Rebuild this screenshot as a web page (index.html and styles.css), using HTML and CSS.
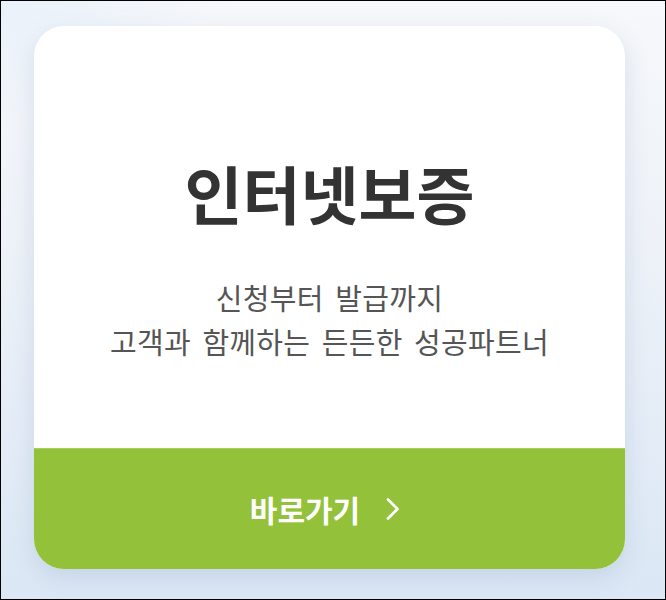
FILE: index.html
```html
<!DOCTYPE html>
<html lang="ko">
<head>
    <meta charset="UTF-8">
    <meta name="viewport" content="width=device-width, initial-scale=1.0">
    <title>인터넷보증</title>
    <link rel="stylesheet" href="styles.css">
</head>
<body>

<div class="frame">
    <div class="guarantee-card">
        <div class="card-body">
            <h2>인터넷보증</h2>
            <p>신청부터 발급까지<br>고객과 함께하는 든든한 성공파트너</p>
        </div>
        <a class="card-link" href="#">
            <span>바로가기</span>
            <svg width="16" height="24" viewBox="0 0 16 24">
                <path d="M3 2.5 L12.5 12 L3 21.5" fill="none" stroke="#fff" stroke-width="2.6" stroke-linecap="round" stroke-linejoin="round"/>
            </svg>
        </a>
    </div>
</div>

</body>
</html>
```

FILE: styles.css
```css
body {
    margin: 0;
    font-family: "Noto Sans CJK KR", "Noto Sans", sans-serif;
}

.frame {
    box-sizing: border-box;
    width: 666px;
    height: 600px;
    border: 1px solid #000;
    padding: 25px 40px 30px 33px;
    background:
        linear-gradient(150deg, rgba(232, 240, 250, 0.9) 0, rgba(232, 240, 250, 0) 14%),
        linear-gradient(180deg, #f6f8fb 0%, #eef2f8 40%, #dbe7f5 100%);
}

.guarantee-card {
    height: 543px;
    background-color: #fff;
    border-radius: 30px;
    overflow: hidden;
    display: flex;
    flex-direction: column;
    box-shadow: 0 8px 24px rgba(90, 120, 160, 0.18);
}

.card-body {
    flex: 1;
    text-align: center;
    padding-top: 124px;
}

.card-body h2 {
    margin: 0;
    font-size: 63px;
    font-weight: 700;
    line-height: 84px;
    color: #333;
}

.card-body p {
    margin: 41px 0 0;
    font-size: 29px;
    letter-spacing: 0.3px;
    word-spacing: 3px;
    line-height: 44px;
    color: #555;
}

.card-link {
    height: 120px;
    background-color: #93c23a;
    border-top: 1px solid #a7cf5c;
    display: flex;
    justify-content: center;
    align-items: center;
    gap: 25px;
    padding-right: 8px;
    color: #fff;
    text-decoration: none;
    font-size: 30px;
    font-weight: 700;
}
```
